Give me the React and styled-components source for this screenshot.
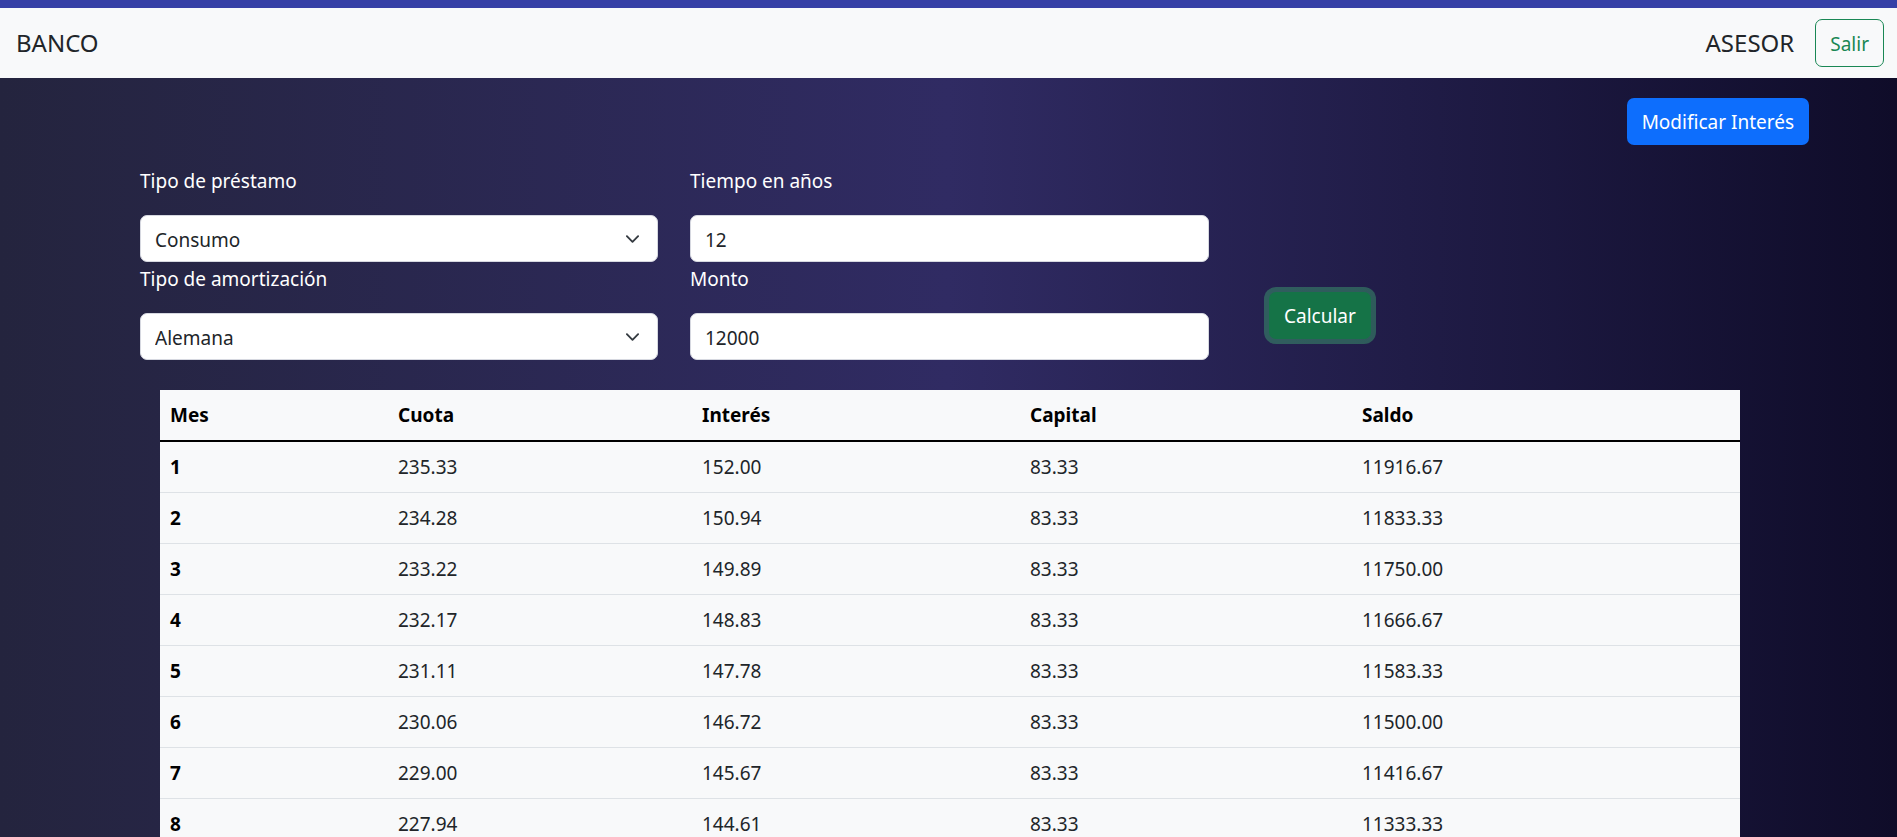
import React from 'react';
import styled, { createGlobalStyle } from 'styled-components';

const GlobalStyle = createGlobalStyle`
  html {
    scrollbar-width: none;
  }
  html::-webkit-scrollbar {
    display: none;
  }
  body {
    margin: 0;
    font-family: "Noto Sans", "Open Sans", sans-serif;
    font-size: 19px;
    line-height: 30px;
    color: #212529;
    background: linear-gradient(to right, #24243e, #302b63, #0f0c29);
  }
  * {
    box-sizing: border-box;
  }
`;

const TopStripe = styled.div`
  height: 8px;
  background: #3640a6;
`;

const Navbar = styled.nav`
  height: 70px;
  background: #f8f9fa;
  display: flex;
  align-items: center;
  justify-content: space-between;
  padding: 0 13px 0 16px;
`;

const Brand = styled.span`
  font-size: 24px;
  color: #212529;
`;

const NavRight = styled.div`
  display: flex;
  align-items: center;
  gap: 21px;
`;

const Role = styled.span`
  font-size: 24px;
  color: #212529;
`;

const OutlineButton = styled.button`
  font-family: inherit;
  font-size: 19px;
  height: 48px;
  padding: 2px 14px 0;
  color: #198754;
  background: transparent;
  border: 1px solid #198754;
  border-radius: 7px;
`;

const Main = styled.main`
  padding-top: 20px;
`;

const TopActions = styled.div`
  display: flex;
  justify-content: flex-end;
  padding-right: 88px;
`;

const Button = styled.button`
  font-family: inherit;
  font-size: 19px;
  height: 47px;
  padding: 0 ${(p) => p.$px || 15}px;
  color: #fff;
  background: ${(p) => p.$bg};
  border: none;
  border-radius: 7px;
  box-shadow: ${(p) => (p.$focus ? '0 0 0 5px rgba(60, 153, 110, 0.5)' : 'none')};
`;

const FormRow = styled.div`
  display: flex;
  align-items: flex-start;
  padding-left: 140px;
  margin-top: 21px;
`;

const FieldsGrid = styled.div`
  display: grid;
  grid-template-columns: 518px 519px;
  column-gap: 32px;
  row-gap: 2px;
`;

const Field = styled.div`
  display: flex;
  flex-direction: column;
`;

const Label = styled.label`
  color: #fff;
  line-height: 30px;
  margin-bottom: 19px;
`;

const SelectWrap = styled.div`
  position: relative;
`;

const Select = styled.select`
  appearance: none;
  width: 100%;
  height: 47px;
  font-family: inherit;
  font-size: 19px;
  color: #212529;
  background: #fff;
  border: 1px solid #d6d8e0;
  border-radius: 7px;
  padding: 2px 50px 0 14px;
`;

const Chevron = styled.svg`
  position: absolute;
  right: 18px;
  top: 50%;
  transform: translateY(-50%);
  pointer-events: none;
`;

const Input = styled.input`
  width: 100%;
  height: 47px;
  font-family: inherit;
  font-size: 19px;
  color: #212529;
  background: #fff;
  border: 1px solid #d6d8e0;
  border-radius: 7px;
  padding: 2px 14px 0;
`;

const CalcSlot = styled.div`
  margin: 126px 0 0 60px;
`;

const TableWrap = styled.div`
  padding: 30px 0 0 160px;
`;

const Table = styled.table`
  width: 1580px;
  border-collapse: collapse;
  background: #f8f9fa;
  table-layout: fixed;
`;

const Th = styled.th`
  text-align: left;
  font-weight: 700;
  color: #000;
  padding: 10px;
  height: 50px;
  border-bottom: 2px solid #000;
`;

const Td = styled.td`
  padding: 10px;
  height: 51px;
  color: ${(p) => (p.$bold ? '#000' : '#212529')};
  font-weight: ${(p) => (p.$bold ? 700 : 400)};
  border-bottom: 1px solid #dee2e6;
`;

const columns = [
  { label: 'Mes', width: 228 },
  { label: 'Cuota', width: 304 },
  { label: 'Interés', width: 328 },
  { label: 'Capital', width: 332 },
  { label: 'Saldo', width: 388 },
];

// tabla alemana: capital fijo, interés sobre saldo
function buildRows(monto, anios, tasa, visibles) {
  const meses = anios * 12;
  const capital = monto / meses;
  const rate = tasa / 12;
  let saldo = monto;
  const rows = [];
  for (let i = 1; i <= Math.min(meses, visibles); i++) {
    const interes = saldo * rate;
    saldo -= capital;
    rows.push({
      mes: i,
      cuota: (capital + interes).toFixed(2),
      interes: interes.toFixed(2),
      capital: capital.toFixed(2),
      saldo: Math.abs(saldo).toFixed(2),
    });
  }
  return rows;
}

const rows = buildRows(12000, 12, 0.152, 8);

function SelectField({ label, options }) {
  return (
    <Field>
      <Label>{label}</Label>
      <SelectWrap>
        <Select defaultValue={options[0]}>
          {options.map((o) => (
            <option key={o}>{o}</option>
          ))}
        </Select>
        <Chevron width="15" height="15" viewBox="0 0 16 16">
          <path d="m2 5 6 6 6-6" fill="none" stroke="#343a40" strokeWidth="2" strokeLinecap="round" strokeLinejoin="round" />
        </Chevron>
      </SelectWrap>
    </Field>
  );
}

function TextField({ label, value }) {
  return (
    <Field>
      <Label>{label}</Label>
      <Input defaultValue={value} />
    </Field>
  );
}

export default function App() {
  return (
    <>
      <GlobalStyle />
      <TopStripe />
      <Navbar>
        <Brand>BANCO</Brand>
        <NavRight>
          <Role>ASESOR</Role>
          <OutlineButton>Salir</OutlineButton>
        </NavRight>
      </Navbar>
      <Main>
        <TopActions>
          <Button $bg="#0d6efd">Modificar Interés</Button>
        </TopActions>
        <FormRow>
          <FieldsGrid>
            <SelectField label="Tipo de préstamo" options={['Consumo', 'Hipotecario', 'Vehicular']} />
            <TextField label="Tiempo en años" value="12" />
            <SelectField label="Tipo de amortización" options={['Alemana', 'Francesa']} />
            <TextField label="Monto" value="12000" />
          </FieldsGrid>
          <CalcSlot>
            <Button $bg="#157347" $focus $px={15}>Calcular</Button>
          </CalcSlot>
        </FormRow>
        <TableWrap>
          <Table>
            <colgroup>
              {columns.map((c) => (
                <col key={c.label} style={{ width: c.width }} />
              ))}
            </colgroup>
            <thead>
              <tr>
                {columns.map((c) => (
                  <Th key={c.label}>{c.label}</Th>
                ))}
              </tr>
            </thead>
            <tbody>
              {rows.map((r) => (
                <tr key={r.mes}>
                  <Td $bold>{r.mes}</Td>
                  <Td>{r.cuota}</Td>
                  <Td>{r.interes}</Td>
                  <Td>{r.capital}</Td>
                  <Td>{r.saldo}</Td>
                </tr>
              ))}
            </tbody>
          </Table>
        </TableWrap>
      </Main>
    </>
  );
}
